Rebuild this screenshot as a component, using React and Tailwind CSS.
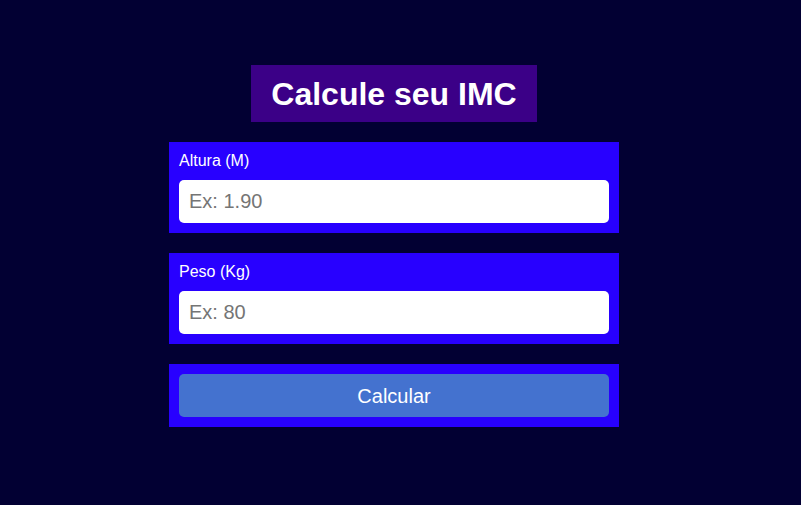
import React from 'react';

const Field = ({ label, placeholder }) => (
  <div className="w-[450px] bg-[#2800ff] p-[10px] flex flex-col">
    <label className="text-[16px] leading-[18px] text-white mb-[10px]">{label}</label>
    <input
      type="text"
      placeholder={placeholder}
      className="h-[43px] w-full rounded-[5px] bg-white px-[10px] text-[20px] text-black placeholder:text-[#757575] outline-none"
    />
  </div>
);

const App = () => {
  return (
    <div
      className="min-h-[505px] w-full bg-[#020033] flex justify-center pr-[13px] pt-[65px]"
      style={{ fontFamily: '"Liberation Sans", Arial, sans-serif' }}
    >
      <div className="flex flex-col items-center gap-[20px]">
        <h1 className="h-[57px] px-[20px] bg-[#3b0087] text-white text-[32px] font-bold flex items-center">
          Calcule seu IMC
        </h1>
        <Field label="Altura (M)" placeholder="Ex: 1.90" />
        <Field label="Peso (Kg)" placeholder="Ex: 80" />
        <div className="w-[450px] bg-[#2800ff] p-[10px]">
          <button className="w-full h-[43px] rounded-[5px] bg-[#4472cf] text-white text-[20px]">
            Calcular
          </button>
        </div>
      </div>
    </div>
  );
};

export default App;
